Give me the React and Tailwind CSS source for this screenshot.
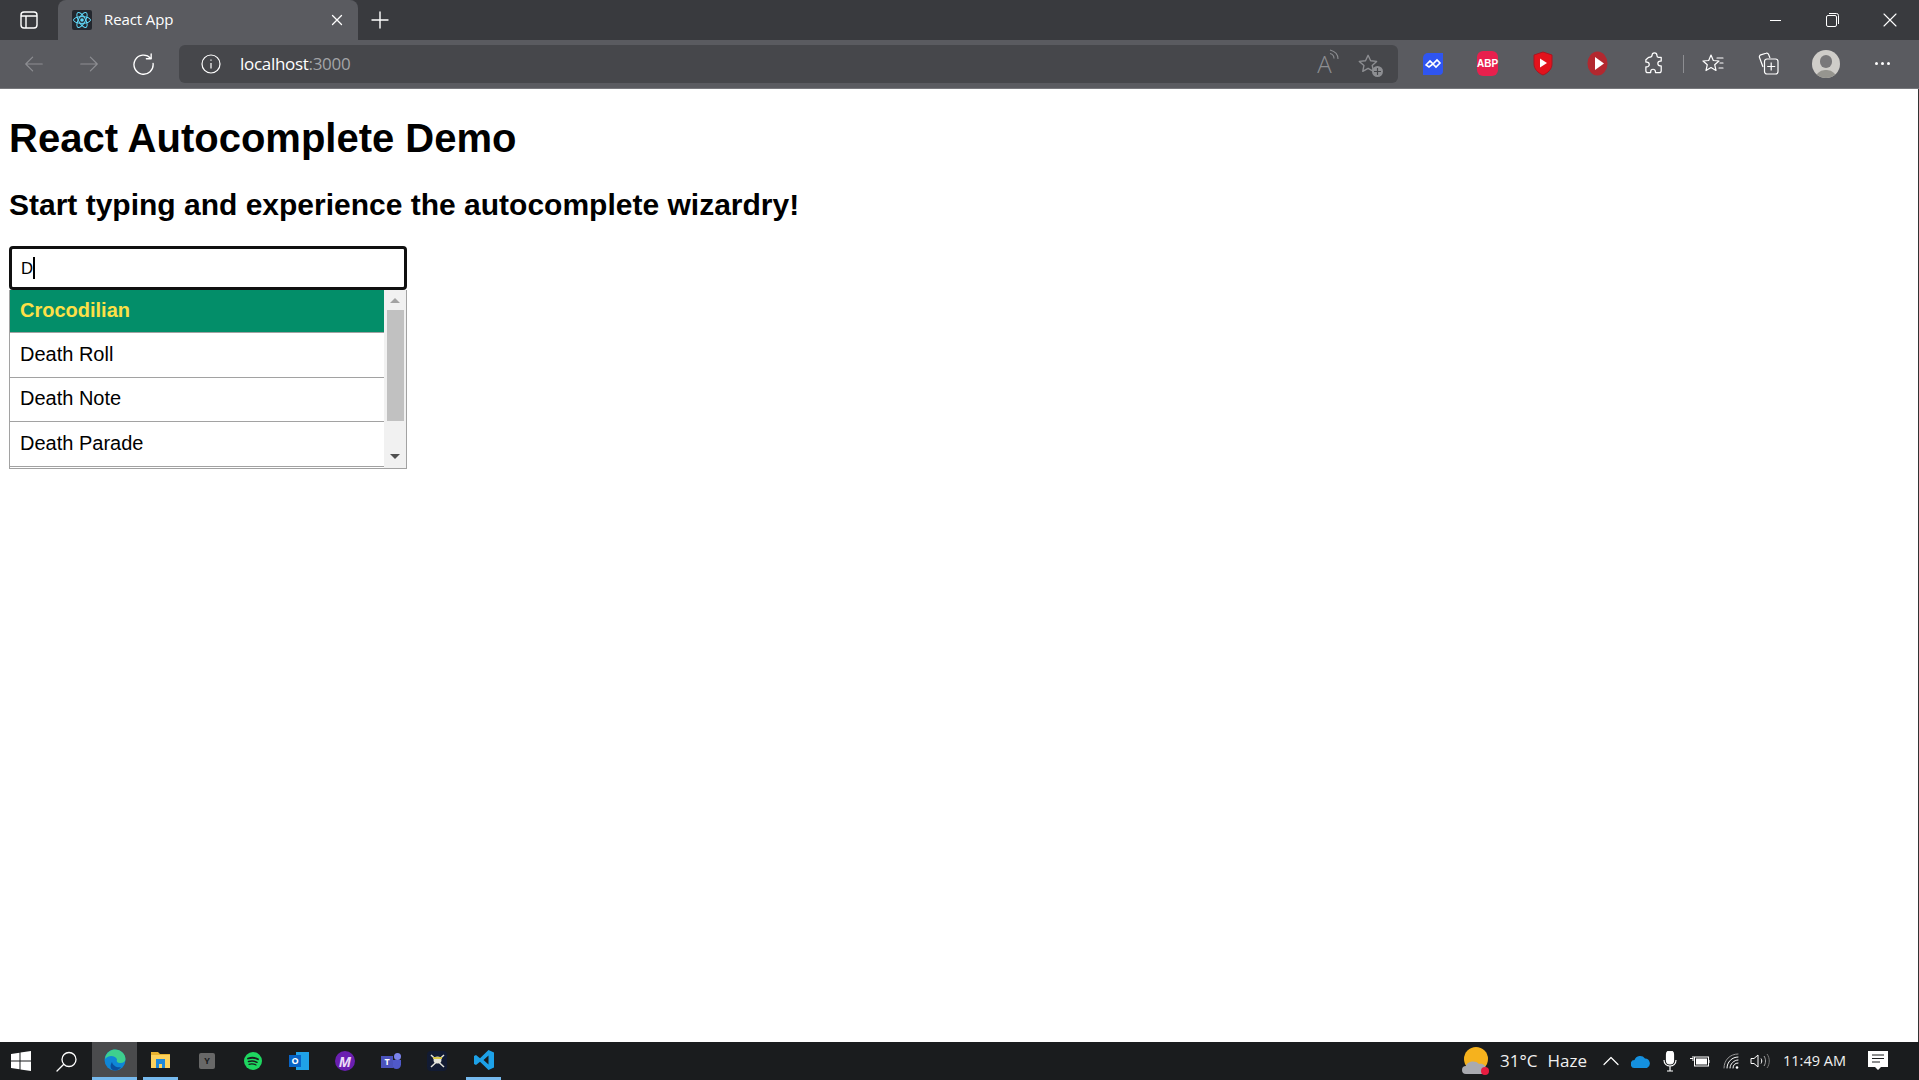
import React from "react";

const uiFont = "font-['Open_Sans',sans-serif]";

function Slot({ w = "w-[55px]", children }) {
  return <div className={`${w} h-full flex items-center justify-center shrink-0`}>{children}</div>;
}

function Line({ d, size = 24, color = "#fff", sw = 1.5, box = 24 }) {
  return (
    <svg width={size} height={size} viewBox={`0 0 ${box} ${box}`} fill="none" stroke={color} strokeWidth={sw} strokeLinecap="round" strokeLinejoin="round">
      {[].concat(d).map((p, i) => <path key={i} d={p} />)}
    </svg>
  );
}

function ReactLogo() {
  return (
    <svg width="20" height="20" viewBox="0 0 20 20" fill="none" stroke="#61dafb" strokeWidth="1">
      <rect width="20" height="20" rx="2" fill="#23272e" stroke="none" />
      <circle cx="10" cy="10" r="1.8" fill="#61dafb" stroke="none" />
      <ellipse cx="10" cy="10" rx="8.5" ry="3.4" />
      <ellipse cx="10" cy="10" rx="8.5" ry="3.4" transform="rotate(60 10 10)" />
      <ellipse cx="10" cy="10" rx="8.5" ry="3.4" transform="rotate(120 10 10)" />
    </svg>
  );
}

function TabStrip() {
  return (
    <div className="h-10 bg-[#393a3e] flex items-stretch">
      <div className="w-[58px] flex items-center justify-center">
        <svg width="18" height="18" viewBox="0 0 18 18" fill="none" stroke="#fff" strokeWidth="1.4">
          <rect x="1" y="1" width="16" height="16" rx="3" />
          <path d="M1 5h16M6 5v12" />
        </svg>
      </div>
      <div className="w-[300px] h-10 bg-[#5a5b60] rounded-t-lg flex items-center pl-[14px] pr-[15px]">
        <ReactLogo />
        <span className={`ml-[12px] pb-[2px] text-[15px] tracking-[-0.1px] text-white flex-1 ${uiFont}`}>React App</span>
        <Line size={12} box={12} sw={1.3} d="M1.5 1.5l9 9M10.5 1.5l-9 9" />
      </div>
      <div className="w-[44px] flex items-center justify-center">
        <Line size={18} box={18} sw={1.4} d="M9 1v16M1 9h16" />
      </div>
      <div className="flex-1" />
      <Slot w="w-[57px]"><div className="w-[11px] h-px bg-white" /></Slot>
      <Slot w="w-[57px]">
        <svg width="13" height="14" viewBox="0 0 13 14" fill="none" stroke="#fff" strokeWidth="1">
          <rect x="0.5" y="2.5" width="10" height="11" rx="1.5" />
          <path d="M3 .5h7.5a2 2 0 0 1 2 2V11" />
        </svg>
      </Slot>
      <Slot w="w-[57px]"><Line size={14} box={14} sw={1.1} d="M1 1l12 12M13 1L1 13" /></Slot>
      <div className="w-px" />
    </div>
  );
}

function Toolbar() {
  return (
    <div className="h-[49px] bg-[#5a5b60] border-b border-[#77787c] flex items-center pl-[6px] pb-px">
      <Slot><Line color="#8d8e92" size={22} d="M21 12H3M10.5 4.5 3 12l7.5 7.5" sw={1.3} /></Slot>
      <Slot><Line color="#8d8e92" size={22} d="M3 12h18M13.5 4.5 21 12l-7.5 7.5" sw={1.3} /></Slot>
      <Slot><Line size={23} sw={1.4} d={["M19.5 6.5A10 10 0 1 0 22 12", "M20 2v5h-5"]} /></Slot>
      <div className={`ml-[8px] w-[1219px] h-[38px] bg-[#46474b] rounded-md flex items-center pl-[22px] ${uiFont}`}>
        <svg width="20" height="20" viewBox="0 0 20 20" fill="none" stroke="#fff" strokeWidth="1.2">
          <circle cx="10" cy="10" r="9" />
          <path d="M10 9v5.5M10 5.5v1.2" />
        </svg>
        <span className="ml-[19px] text-[17px] tracking-[-0.3px] text-white flex-1">
          localhost<span className="text-[#a3a4a7]">:3000</span>
        </span>
        <Slot w="w-[45px]">
          <span className="relative pl-[4px] pr-[2px] text-[24px] font-light leading-none text-[#8d8e92]">A
            <svg className="absolute right-[-6px] -top-[3px]" width="11" height="12" viewBox="0 0 11 12" fill="none" stroke="#8d8e92" strokeWidth="1.1">
              <path d="M1 1c4 1 8 4 8 9M1 4.500c2 .5 4 2 4 5" />
            </svg>
          </span>
        </Slot>
        <Slot w="w-[45px]">
          <div className="relative">
            <Line color="#8d8e92" size={22} d="M11 2.500l2.800 6 6.500.7-4.800 4.400 1.300 6.400-5.800-3.300-5.800 3.300 1.300-6.400L1.400 9.200l6.800-.7z" />
            <div className="absolute right-[-3px] bottom-[-2px] w-[11px] h-[11px] rounded-full bg-[#8d8e92] flex items-center justify-center">
              <Line color="#46474b" size={7} box={7} sw={1.2} d="M3.500 .5v6M.5 3.500h6" />
            </div>
          </div>
        </Slot>
        <div className="w-[7px]" />
      </div>
      <div className="w-[7px]" />
      <Slot>
        <svg width="20" height="24" viewBox="0 0 20 24">
          <path d="M5 1h15v18a4 4 0 0 1-4 4H0V6a5 5 0 0 1 5-5z" fill="#2f55f0" />
          <path d="M3 13l4-4 3 3-4 3zM10 12l4-4 3 3-4 4z" fill="none" stroke="#fff" strokeWidth="1.6" />
        </svg>
      </Slot>
      <Slot>
        <div className="w-[21px] h-[25px] bg-[#e8204d] rounded-[6px] flex items-center justify-center text-white text-[10px] font-bold font-['Liberation_Sans',sans-serif]">ABP</div>
      </Slot>
      <Slot>
        <svg width="20" height="25" viewBox="0 0 20 25">
          <path d="M1 4l9-3 9 3v9c0 5-4 9-9 11-5-2-9-6-9-11z" fill="#e3121c" stroke="#a91520" />
          <path d="M7 7.500l7 4.500-7 4.500z" fill="#fff" />
        </svg>
      </Slot>
      <Slot>
        <svg width="21" height="25" viewBox="0 0 21 25">
          <ellipse cx="10.500" cy="12.500" rx="10" ry="12" fill="#b3282f" />
          <path d="M8 6l9 6.500L8 19z" fill="#fff" />
        </svg>
      </Slot>
      <Slot w="w-[58px]">
        <Line size={23} sw={1.3} d="M9.500 3.500a2.500 2.500 0 0 1 5 0c0 1 .5 2 1.500 2h3v4h-1a2.500 2.500 0 0 0 0 5h1v5a2 2 0 0 1-2 2h-4v-1a2.500 2.500 0 0 0-5 0v1H5a2 2 0 0 1-2-2v-4h1a2.500 2.500 0 0 0 0-5H3V8l3-2.500c2 0 3.500-1 3.500-2z" />
      </Slot>
      <div className="w-px h-[18px] bg-[#8d8e92]" />
      <div className="w-[1px]" />
      <Slot>
        <Line size={24} sw={1.2} d={["M10 3l2.300 5.500 5.700.5-4.300 3.700 1.300 5.800-5-3-5 3 1.300-5.800L2 9l5.700-.5z", "M16 6h6M19 11h3M18 16h4"]} />
      </Slot>
      <Slot>
        <svg width="22" height="24" viewBox="0 0 22 24" fill="none" stroke="#fff" strokeWidth="1.2">
          <path d="M6 15 2.500 5.500a2 2 0 0 1 1.200-2.600L9 1.200a2 2 0 0 1 2.500 1L13 6" />
          <rect x="7.500" y="7" width="13.500" height="15" rx="2.500" />
          <path d="M14.200 10.500v8M10.200 14.500h8" />
        </svg>
      </Slot>
      <Slot w="w-[62px]">
        <div className="relative w-7 h-[28px] rounded-full bg-[#cfcdc9] overflow-hidden">
          <div className="absolute left-[8px] top-[5px] w-3 h-[13px] rounded-full bg-[#79787a]" />
          <div className="absolute left-[3px] top-[20px] w-[22px] h-5 rounded-full bg-[#96958f]" />
        </div>
      </Slot>
      <Slot w="w-[51px]">
        <div className="flex gap-[3px]">
          <div className="w-[3px] h-[3px] rounded-full bg-white" />
          <div className="w-[3px] h-[3px] rounded-full bg-white" />
          <div className="w-[3px] h-[3px] rounded-full bg-white" />
        </div>
      </Slot>
    </div>
  );
}

function Suggestions() {
  const items = ["Death Roll", "Death Note", "Death Parade"];
  return (
    <div className="w-[398px] h-[179px] border border-[#a2a2a2] border-t-0 flex overflow-hidden text-[20px] text-black">
      <div className="flex-1">
        <div className="h-[43px] bg-[#038e69] text-[#fde047] font-bold flex items-center pl-[10px] pb-[2px] border-b border-[#a2a2a2]">Crocodilian</div>
        {items.map((item) => (
          <div key={item} className="h-[44.500px] flex items-center pl-[10px] pb-[2px] border-b border-[#a2a2a2]">{item}</div>
        ))}
      </div>
      <div className="w-[22px] bg-[#f1f1f1] flex flex-col items-center">
        <div className="w-0 h-0 mt-[8px] border-x-[5px] border-x-transparent border-b-[5px] border-b-[#a3a3a3]" />
        <div className="w-[17px] h-[111px] mt-[7px] bg-[#c1c1c1]" />
        <div className="w-0 h-0 mt-auto mb-[9px] border-x-[5px] border-x-transparent border-t-[5px] border-t-[#505050]" />
      </div>
    </div>
  );
}

function Page() {
  return (
    <div className="flex-1 bg-white border-r border-[#333] pl-[9px] font-['Liberation_Sans',sans-serif] text-black overflow-hidden">
      <h1 className="text-[40px] leading-[46px] font-bold mt-[26px]">React Autocomplete Demo</h1>
      <h2 className="text-[30px] leading-[35px] font-bold mt-[26px]">Start typing and experience the autocomplete wizardry!</h2>
      <div className="w-[398px] h-[44px] mt-[24px] border-[3px] border-[#101010] rounded-[4px] flex items-center pl-[9px] text-[16.67px]">
        D<div className="w-[2px] h-[22px] bg-black" />
      </div>
      <Suggestions />
    </div>
  );
}

function Taskbar() {
  const under = "border-b-[3px] border-[#76b9ed]";
  return (
    <div className={`h-[38px] bg-[#1a1c1e] flex items-stretch text-[#f0f0f0] ${uiFont}`}>
      <Slot w="w-[42px]">
        <svg width="20" height="20" viewBox="0 0 20 20" fill="#fff">
          <path d="M0 3l8.500-1.200V9.500H0zM9.500 1.600 20 0v9.500H9.500zM0 10.500h8.500v7.800L0 17zM9.500 10.500H20V20L9.500 18.500z" />
        </svg>
      </Slot>
      <Slot w="w-[48px]"><Line size={21} box={21} sw={1.3} d="M1 20l6.500-6.500M13 1.500a7 7 0 1 1 0 14 7 7 0 0 1 0-14z" /></Slot>
      <div className="w-[2px]" />
      <div className={`w-[45px] bg-[#4a4b4d] flex items-center justify-center ${under}`}>
        <svg width="22" height="22" viewBox="0 0 22 22">
          <circle cx="11" cy="11" r="10.500" fill="#0f86d6" />
          <path d="M1 10C2 3 7 .5 11 .5c6 0 10.500 4.500 10.500 9.500 0 3-3 4.500-6 4-3-.5-3-2.500-2.500-3.500C12 7 5 5 1 10z" fill="#3ecf8e" />
          <path d="M8 13c1 4 5 6 9 5-2 3-5 4-8 3-3-1-3-5-1-8z" fill="#0a4f9e" />
        </svg>
      </div>
      <div className="w-[6px]" />
      <div className={`w-[35px] flex items-center justify-center ${under}`}>
        <svg width="19" height="17" viewBox="0 0 19 17">
          <path d="M0 1h7l2 2h10v3H0z" fill="#e8b22f" />
          <rect y="4" width="19" height="13" fill="#fcd25d" />
          <path d="M5 17V8h9v9h-3v-4H8v4z" fill="#1e88d9" />
        </svg>
      </div>
      <div className="w-[6px]" />
      <Slot w="w-[46px]">
        <div className="w-4 h-4 bg-[#686868] rounded-[2px] flex items-center justify-center text-[9px] font-bold text-[#1a1c1e]">Y</div>
      </Slot>
      <Slot w="w-[46px]">
        <svg width="18" height="18" viewBox="0 0 18 18" fill="none" stroke="#1a1c1e" strokeLinecap="round">
          <circle cx="9" cy="9" r="9" fill="#1ed760" stroke="none" />
          <path d="M4 6.500c3-1 7-1 10 .7" strokeWidth="1.800" />
          <path d="M4.500 9.500c3-.8 6-.6 8.500.8" strokeWidth="1.500" />
          <path d="M5 12.300c2.500-.6 5-.4 7 .7" strokeWidth="1.200" />
        </svg>
      </Slot>
      <Slot w="w-[46px]">
        <div className="relative w-5 h-[18px]">
          <div className="absolute right-0 top-0 w-[13px] h-[18px] bg-[#1fa2e8]" />
          <div className="absolute left-0 top-[3px] w-3 h-3 bg-[#0864c6] text-white text-[9px] font-bold flex items-center justify-center">O</div>
        </div>
      </Slot>
      <Slot w="w-[46px]">
        <div className="w-5 h-5 rounded-full bg-[#6a1fb0] text-[#ecdcf8] text-[14px] italic font-bold flex items-center justify-center">M</div>
      </Slot>
      <Slot w="w-[46px]">
        <div className="relative w-5 h-[18px]">
          <div className="absolute right-0 top-[1px] w-[7px] h-[7px] rounded-full bg-[#7b83eb]" />
          <div className="absolute right-0 top-[8px] w-[9px] h-[9px] rounded-b-md bg-[#5059c9]" />
          <div className="absolute left-0 top-[4px] w-3 h-3 bg-[#4b53bc] text-white text-[9px] font-bold flex items-center justify-center">T</div>
        </div>
      </Slot>
      <Slot w="w-[46px]">
        <div className="w-5 h-5 rounded-[4px] bg-[#121b33] flex items-center justify-center">
          <svg width="15" height="14" viewBox="0 0 15 14" fill="none" stroke="#e4e4dc" strokeWidth="1.500">
            <path d="M1 1l13 12M14 1 1 13" />
            <ellipse cx="7.500" cy="6" rx="4" ry="3.500" fill="#e4e4dc" stroke="none" />
            <path d="M3 4h9" stroke="#d9c84a" strokeWidth="2" />
          </svg>
        </div>
      </Slot>
      <div className="w-[6px]" />
      <div className={`w-[35px] flex items-center justify-center ${under}`}>
        <svg width="20" height="20" viewBox="0 0 20 20">
          <path d="M14.500 0 20 2.500v15L14.500 20 6 11.800l-4 3.200L0 14V6l2-1 4 3.200zM14.500 5.500 9.500 10l5 4.500z" fill="#1da1e8" fillRule="evenodd" />
        </svg>
      </div>
      <div className="flex-1" />
      <div className="w-[50px] flex items-center justify-center">
        <svg width="27" height="28" viewBox="0 0 27 28">
          <circle cx="14" cy="12" r="12" fill="#f6b21d" />
          <path d="M4 27a4 4 0 0 1 0-8c1-5 10-6 13-2 4-1 7 2 7 5v5z" fill="#a9aab0" />
          <circle cx="23" cy="24" r="4" fill="#e81c40" />
        </svg>
      </div>
      <div className="flex items-center text-[17px] whitespace-nowrap w-[96px] gap-[10px]">
        <span>31°C</span><span>Haze</span>
      </div>
      <Slot w="w-[30px]"><Line size={16} box={16} sw={1.2} d="M1 11.500 8 4.500l7 7" /></Slot>
      <Slot w="w-[30px]">
        <svg width="20" height="13" viewBox="0 0 20 13" fill="#1490df">
          <path d="M4 13a4 4 0 0 1-.5-8A6 6 0 0 1 14 3.500 5 5 0 0 1 16 13z" />
        </svg>
      </Slot>
      <Slot w="w-[28px]">
        <svg width="14" height="21" viewBox="0 0 14 21" fill="none" stroke="#fff" strokeWidth="1.200">
          <rect x="3.500" y="0" width="7" height="13" rx="3.500" fill="#fff" />
          <path d="M1 9c0 8 12 8 12 0M7 15v5M4 20h6" />
        </svg>
      </Slot>
      <Slot w="w-[32px]">
        <svg width="20" height="12" viewBox="0 0 20 12" fill="none" stroke="#fff" strokeWidth="1">
          <rect x="4.500" y="2" width="14" height="9" />
          <rect x="6" y="3.500" width="11" height="6" fill="#fff" stroke="none" />
          <path d="M0 3.500h3M3 1v5M19 5v3" />
        </svg>
      </Slot>
      <Slot w="w-[29px]">
        <svg width="16" height="16" viewBox="0 0 16 16" fill="none" stroke="#fff" strokeWidth="1" strokeLinecap="round">
          <path d="M1 15C1 7 7 1 15 1" stroke="#999" />
          <path d="M4 15C4 9 9 4 15 4" />
          <path d="M7 15c0-4 4-8 8-8" />
          <path d="M10 15c0-3 2-5 5-5" />
          <circle cx="14" cy="14.500" r="1.300" fill="#fff" stroke="none" />
        </svg>
      </Slot>
      <Slot w="w-[29px]">
        <svg width="20" height="16" viewBox="0 0 20 16" fill="none" stroke="#fff" strokeWidth="1">
          <path d="M1 5.500h3L8 2v12L4 10.500H1z" />
          <path d="M11 5.500c1 1.500 1 3.500 0 5" />
          <path d="M14 3c2 3 2 7 0 10" stroke="#aaa" />
          <path d="M17 1c3 4 3 10 0 14" stroke="#777" />
        </svg>
      </Slot>
      <div className="w-[81px] flex items-center justify-center text-[14.500px] whitespace-nowrap">11:49 AM</div>
      <Slot w="w-[45px]">
        <svg width="20" height="20" viewBox="0 0 20 20">
          <path d="M0 0h20v16h-7l-3 3-3-3H0z" fill="#fff" />
          <path d="M4 4h12M4 7.500h12M4 11h8" stroke="#1a1c1e" />
        </svg>
      </Slot>
      <div className="w-[19px]" />
    </div>
  );
}

export default function App() {
  return (
    <div className="w-full h-screen flex flex-col overflow-hidden">
      <TabStrip />
      <Toolbar />
      <Page />
      <Taskbar />
    </div>
  );
}
